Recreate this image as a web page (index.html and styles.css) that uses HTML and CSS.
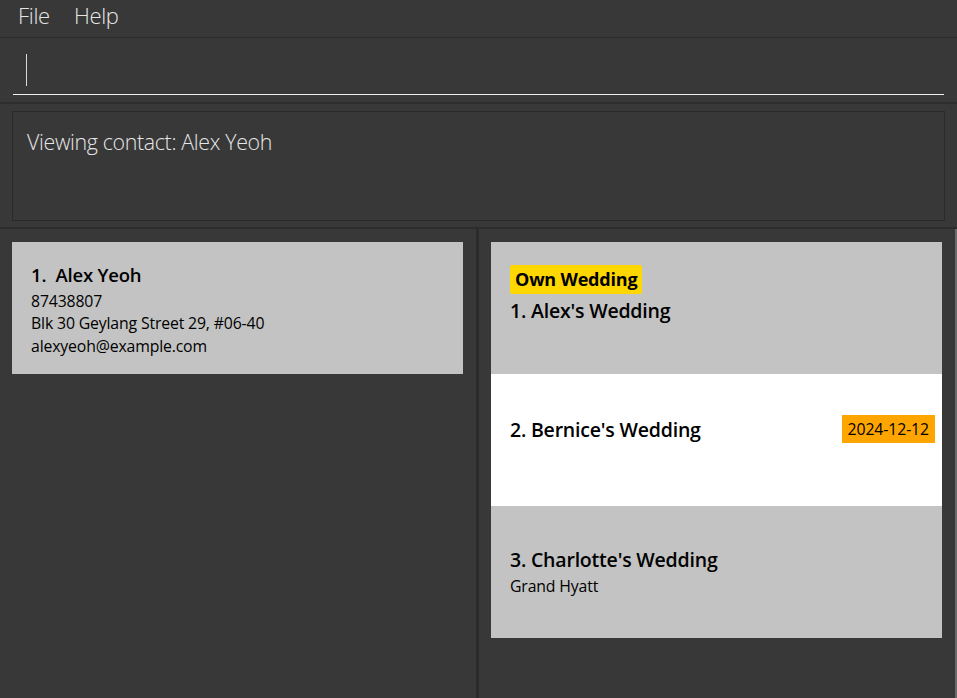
FILE: index.html
```html
<!DOCTYPE html>
<html>
<head>
<meta charset="utf-8">
<link rel="stylesheet" href="styles.css">
</head>
<body>
<div class="window">
  <div class="menubar">
    <span class="menu">File</span>
    <span class="menu">Help</span>
  </div>
  <div class="command">
    <div class="input"><span class="caret"></span></div>
  </div>
  <div class="result">
    <div class="result-box">Viewing contact: Alex Yeoh</div>
  </div>
  <div class="split">
    <div class="pane left">
      <div class="card grey">
        <div class="title name">1.&nbsp; Alex Yeoh</div>
        <div class="line">87438807</div>
        <div class="line">Blk 30 Geylang Street 29, #06-40</div>
        <div class="line">alexyeoh@example.com</div>
      </div>
    </div>
    <div class="divider"></div>
    <div class="pane right">
      <div class="card grey wcard top">
        <span class="own">Own Wedding</span>
        <div class="title wtitle">1. Alex's Wedding</div>
      </div>
      <div class="card white wcard center">
        <div class="row">
          <div class="title wtitle">2. Bernice's Wedding</div>
          <span class="date">2024-12-12</span>
        </div>
        <div class="line empty"></div>
      </div>
      <div class="card grey wcard center">
        <div class="title wtitle">3. Charlotte's Wedding</div>
        <div class="line venue">Grand Hyatt</div>
      </div>
    </div>
    <div class="edge"></div>
  </div>
</div>
</body>
</html>
```
FILE: styles.css
```css
html, body {
  margin: 0;
  padding: 0;
}
body {
  background: #383838;
  font-family: "Open Sans", "Noto Sans", sans-serif;
  overflow: hidden;
}
.window {
  width: 957px;
  height: 698px;
  display: flex;
  flex-direction: column;
}
.menubar {
  height: 37px;
  flex: none;
  border-bottom: 1px solid #2d2d2d;
  display: flex;
  align-items: flex-start;
  padding-left: 18px;
  gap: 24px;
}
.menu {
  font-weight: 300;
  font-size: 22px;
  line-height: 30px;
  color: #e6e6e6;
  letter-spacing: -0.3px;
}
.command {
  height: 64px;
  flex: none;
  padding: 0 13px;
  border-bottom: 2px solid #2d2d2d;
}
.input {
  height: 56px;
  border-bottom: 1px solid #f0f0f0;
  position: relative;
}
.caret {
  position: absolute;
  left: 13px;
  top: 16px;
  width: 1px;
  height: 32px;
  background: #d8d8d8;
}
.result {
  height: 116px;
  flex: none;
  padding: 7px 12px 0 12px;
  border-bottom: 2px solid #2d2d2d;
}
.result-box {
  height: 110px;
  border: 1px solid #2a2a2a;
  box-sizing: border-box;
  padding: 15px 14px;
  color: #e6e6e6;
  font-weight: 300;
  font-size: 21.4px;
  letter-spacing: -0.35px;
  line-height: 30px;
}
.split {
  flex: 1;
  display: flex;
}
.pane {
  display: flex;
  flex-direction: column;
  padding-top: 13px;
}
.left {
  width: 476px;
  padding-left: 12px;
  padding-right: 13px;
  box-sizing: border-box;
}
.divider {
  width: 3px;
  background: #2b2b2b;
}
.right {
  flex: 1;
  padding-left: 12px;
  padding-right: 13px;
}
.edge {
  width: 2px;
  background: #6a6a6a;
}
.card {
  height: 132px;
  box-sizing: border-box;
  padding: 19px 19px;
  color: #000;
}
.grey {
  background: #c3c3c3;
}
.white {
  background: #ffffff;
}
.title {
  font-weight: 600;
  font-size: 18.5px;
  line-height: 27px;
  letter-spacing: -0.2px;
}
.name {
  margin-bottom: 2px;
}
.line {
  font-size: 15.8px;
  line-height: 22.3px;
  letter-spacing: -0.15px;
}
.empty {
  height: 22px;
}
.venue {
  margin-top: 2px;
}
.wcard {
  display: flex;
  flex-direction: column;
  padding-left: 19px;
  padding-right: 7px;
}
.top {
  padding-top: 23px;
  align-items: flex-start;
}
.center {
  justify-content: center;
  padding-top: 0;
  padding-bottom: 0;
}
.wtitle {
  font-size: 19.5px;
}
.own {
  background: #ffd700;
  border-radius: 2px;
  padding: 0 5px;
  font-weight: 700;
  font-size: 18px;
  line-height: 29px;
  letter-spacing: -0.2px;
  margin-bottom: 3px;
}
.row {
  display: flex;
  justify-content: space-between;
  align-items: center;
}
.date {
  background: #ffa500;
  padding: 0 6px;
  font-size: 15.8px;
  line-height: 28px;
  letter-spacing: -0.1px;
}
```
